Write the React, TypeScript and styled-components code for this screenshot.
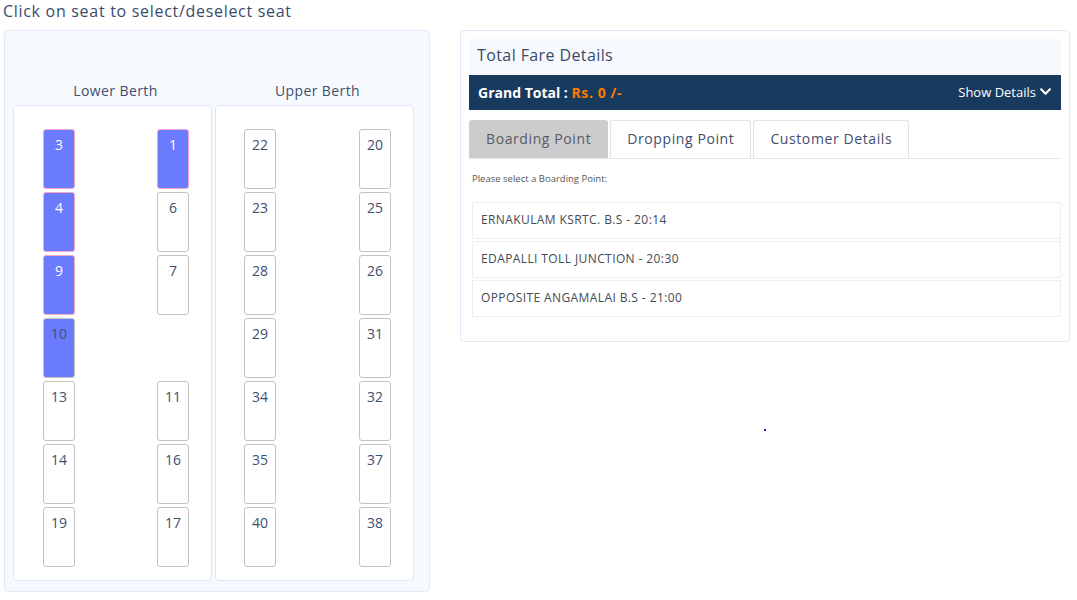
import React from "react";
import styled, { createGlobalStyle } from "styled-components";

const GlobalStyle = createGlobalStyle`
  body {
    margin: 0;
    background: #ffffff;
    font-family: "Open Sans", "Noto Sans", sans-serif;
    color: #3a4a6b;
  }
`;

type Seat = { no: string; state?: "selected" | "booked" } | null;

const lowerDeck: Seat[][] = [
  [{ no: "3", state: "selected" }, { no: "1", state: "selected" }],
  [{ no: "4", state: "selected" }, { no: "6" }],
  [{ no: "9", state: "selected" }, { no: "7" }],
  [{ no: "10", state: "booked" }, null],
  [{ no: "13" }, { no: "11" }],
  [{ no: "14" }, { no: "16" }],
  [{ no: "19" }, { no: "17" }],
];

const upperDeck: Seat[][] = [
  [{ no: "22" }, { no: "20" }],
  [{ no: "23" }, { no: "25" }],
  [{ no: "28" }, { no: "26" }],
  [{ no: "29" }, { no: "31" }],
  [{ no: "34" }, { no: "32" }],
  [{ no: "35" }, { no: "37" }],
  [{ no: "40" }, { no: "38" }],
];

const boardingPoints = [
  "ERNAKULAM KSRTC. B.S - 20:14",
  "EDAPALLI TOLL JUNCTION - 20:30",
  "OPPOSITE ANGAMALAI B.S - 21:00",
];

const renderDeck = (rows: Seat[][]) =>
  rows.map((row, r) =>
    row.map((seat, c) =>
      seat ? (
        <SeatBox key={r + "-" + c} $state={seat.state}>
          {seat.no}
        </SeatBox>
      ) : (
        <Gap key={r + "-" + c} />
      )
    )
  );

const App = () => {
  return (
    <>
      <GlobalStyle />
      <Page>
        <Hint>Click on seat to select/deselect seat</Hint>
        <Columns>
          <SeatPanel>
            <Decks>
              <DeckColumn>
                <DeckLabel>Lower Berth</DeckLabel>
                <Deck $padLeft={29}>{renderDeck(lowerDeck)}</Deck>
              </DeckColumn>
              <DeckColumn>
                <DeckLabel>Upper Berth</DeckLabel>
                <Deck $padLeft={28}>{renderDeck(upperDeck)}</Deck>
              </DeckColumn>
            </Decks>
          </SeatPanel>

          <RightColumn>
            <FarePanel>
              <FareHeader>Total Fare Details</FareHeader>
              <TotalBar>
                <TotalLabel>
                  Grand Total : <Amount>Rs. 0 /-</Amount>
                </TotalLabel>
                <ShowDetails>
                  Show Details
                  <svg width="13" height="13" viewBox="0 0 24 24">
                    <path
                      d="M4 8l8 8 8-8"
                      fill="none"
                      stroke="#ffffff"
                      strokeWidth="4"
                      strokeLinecap="round"
                      strokeLinejoin="round"
                    />
                  </svg>
                </ShowDetails>
              </TotalBar>
              <Tabs>
                <Tab $active>Boarding Point</Tab>
                <Tab>Dropping Point</Tab>
                <Tab>Customer Details</Tab>
              </Tabs>
              <SelectNote>Please select a Boarding Point:</SelectNote>
              <PointList>
                {boardingPoints.map((p) => (
                  <PointItem key={p}>{p}</PointItem>
                ))}
              </PointList>
            </FarePanel>
            <Dot />
          </RightColumn>
        </Columns>
      </Page>
    </>
  );
};

export default App;

const Page = styled.div`
  padding: 1px 0 0 3px;
`;

const Hint = styled.div`
  font-size: 16px;
  line-height: 20px;
  color: #3a4a6b;
  letter-spacing: 0.7px;
`;

const Columns = styled.div`
  display: flex;
  align-items: flex-start;
  gap: 30px;
  margin-top: 9px;
`;

const SeatPanel = styled.div`
  width: 406px;
  margin-left: 1px;
  padding: 50px 10px 10px 8px;
  background: #f6f9fe;
  border: 1px solid #e1eaf8;
  border-radius: 4px;
`;

const Decks = styled.div`
  display: flex;
  gap: 3px;
`;

const DeckColumn = styled.div`
  display: flex;
  flex-direction: column;
  width: 199px;
`;

const DeckLabel = styled.div`
  text-align: center;
  font-size: 14px;
  line-height: 20px;
  margin-bottom: 4px;
  padding-left: 6px;
  letter-spacing: 0.4px;
  color: #3f4f6e;
`;

const Deck = styled.div<{ $padLeft: number }>`
  display: grid;
  grid-template-columns: 32px 32px;
  justify-content: space-between;
  row-gap: 3px;
  padding: 23px 22px 13px ${(p) => p.$padLeft}px;
  background: #ffffff;
  border: 1px solid #dfe8f5;
  border-radius: 4px;
`;

const SeatBox = styled.div<{ $state?: "selected" | "booked" }>`
  box-sizing: border-box;
  width: 32px;
  height: 60px;
  padding-top: 6px;
  text-align: center;
  font-size: 14px;
  line-height: 18px;
  border-radius: 3px;
  border: 1px solid
    ${(p) => (p.$state === "selected" ? "#f3a6c6" : "#c3c3c3")};
  background: ${(p) => (p.$state ? "#6b7bfe" : "#ffffff")};
  color: ${(p) => (p.$state === "selected" ? "#ffffff" : "#3f4f6e")};
`;

const Gap = styled.div`
  width: 32px;
  height: 60px;
`;

const RightColumn = styled.div`
  display: flex;
  flex-direction: column;
  align-items: center;
  width: 610px;
`;

const FarePanel = styled.div`
  box-sizing: border-box;
  width: 100%;
  padding: 8px 8px 24px 8px;
  background: #ffffff;
  border: 1px solid #e1eaf8;
  border-radius: 4px;
`;

const FareHeader = styled.div`
  background: #f6f9fe;
  height: 33px;
  line-height: 33px;
  padding: 0 0 3px 8px;
  font-size: 16px;
  letter-spacing: 0.4px;
  color: #3a4a6b;
`;

const TotalBar = styled.div`
  display: flex;
  align-items: center;
  justify-content: space-between;
  height: 35px;
  padding: 0 9px;
  background: #173a5e;
  color: #ffffff;
`;

const TotalLabel = styled.div`
  font-size: 14px;
  font-weight: 700;
`;

const Amount = styled.span`
  color: #ff7b00;
  font-size: 14px;
  letter-spacing: 0.6px;
`;

const ShowDetails = styled.div`
  display: flex;
  align-items: center;
  gap: 3px;
  font-size: 13px;
  margin-top: -2px;
`;

const Tabs = styled.div`
  display: flex;
  gap: 2px;
  margin-top: 10px;
  border-bottom: 1px solid #e3e6ec;
`;

const Tab = styled.div<{ $active?: boolean }>`
  height: 35px;
  line-height: 35px;
  padding: 0 16px 2px 16px;
  font-size: 14px;
  letter-spacing: 0.6px;
  border: 1px solid ${(p) => (p.$active ? "#cccccc" : "#dfe3ea")};
  border-bottom: none;
  border-radius: 3px 3px 0 0;
  background: ${(p) => (p.$active ? "#cccccc" : "#ffffff")};
  color: ${(p) => (p.$active ? "#555b66" : "#3f4f6e")};
`;

const SelectNote = styled.div`
  margin: 13px 0 0 3px;
  font-size: 9.5px;
  color: #555555;
`;

const PointList = styled.div`
  display: flex;
  flex-direction: column;
  gap: 2px;
  margin: 17px 0 0 3px;
`;

const PointItem = styled.div`
  height: 35px;
  line-height: 34px;
  padding-left: 8px;
  font-size: 12px;
  letter-spacing: 0.4px;
  color: #444a55;
  border: 1px solid #eeeeee;
`;

const Dot = styled.div`
  width: 2px;
  height: 2px;
  margin-top: 87px;
  background: #1a1aff;
`;
